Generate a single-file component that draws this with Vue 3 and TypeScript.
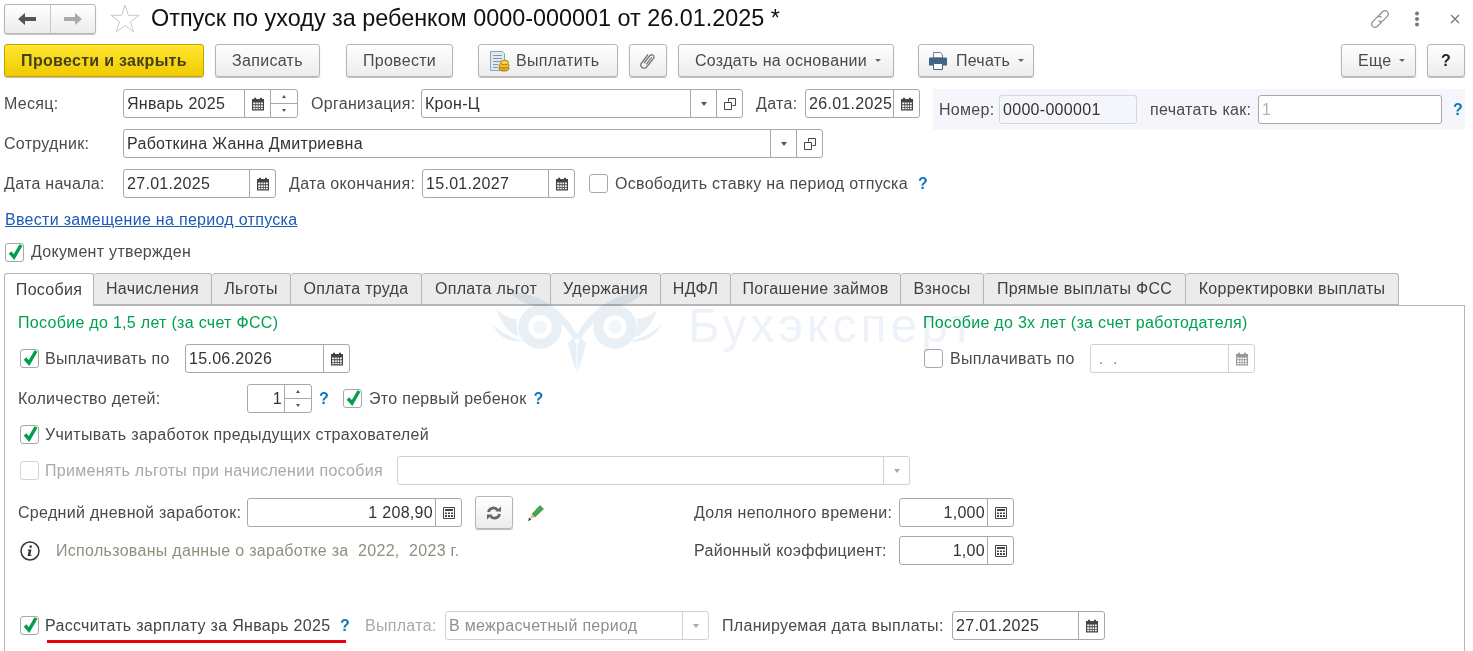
<script setup lang="ts">
interface Tab { label: string; width: number }
const tabs: Tab[] = [
  { label: 'Пособия', width: 90 },
  { label: 'Начисления', width: 118 },
  { label: 'Льготы', width: 79 },
  { label: 'Оплата труда', width: 131 },
  { label: 'Оплата льгот', width: 129 },
  { label: 'Удержания', width: 110 },
  { label: 'НДФЛ', width: 70 },
  { label: 'Погашение займов', width: 170 },
  { label: 'Взносы', width: 83 },
  { label: 'Прямые выплаты ФСС', width: 202 },
  { label: 'Корректировки выплаты', width: 213 },
]
</script>

<template>
  <div class="page">
    <svg class="defs" aria-hidden="true">
      <defs>
        <symbol id="cal" viewBox="0 0 14 14">
          <path fill="currentColor" d="M1 2h2V.8h2V2h4V.8h2V2h2v11.5H1z"/>
          <path fill="#fff" d="M2.2 5.5h2.2v1.8H2.2zM5.2 5.5h1.6v1.8H5.2zM7.6 5.5h1.6v1.8H7.6zM10 5.5h1.8v1.8H10zM2.2 8.2h2.2V10H2.2zM5.2 8.2h1.6V10H5.2zM7.6 8.2h1.6V10H7.6zM10 8.2h1.8V10H10zM2.2 10.8h2.2v1.5H2.2zM5.2 10.8h1.6v1.5H5.2zM7.6 10.8h1.6v1.5H7.6zM10 10.8h1.8v1.5H10z"/>
        </symbol>
        <symbol id="calc" viewBox="0 0 14 14">
          <path fill="none" stroke="currentColor" d="M1.5 1.5h11v11h-11z"/>
          <path fill="currentColor" d="M3 3h8v2H3zM3 6.5h2v1.5H3zM6 6.5h2v1.5H6zM9 6.5h2v1.5H9zM3 9h2v2H3zM6 9h2v2H6zM9 9h2v2H9z"/>
        </symbol>
        <symbol id="open" viewBox="0 0 12 12">
          <path fill="none" stroke="currentColor" d="M4.5 3.5v-3h7v7h-3M.5 4.5h7v7h-7z"/>
        </symbol>
        <symbol id="check" viewBox="0 0 19 19">
          <path fill="none" stroke="#00a04a" stroke-width="3.4" d="M4 9.5l4 4.500 7-12"/>
        </symbol>
      </defs>
    </svg>

    <header class="title-row">
      <div class="nav">
        <span class="nav-b">
          <svg width="18" height="14" viewBox="0 0 18 14"><path fill="#555" d="M0 7l7-6v4h11v4H7v4z"/></svg>
        </span>
        <span class="nav-b">
          <svg width="18" height="14" viewBox="0 0 18 14"><path fill="#aaa" d="M18 7l-7-6v4H0v4h11v4z"/></svg>
        </span>
      </div>
      <svg class="star" width="30" height="29" viewBox="0 0 30 29"><path fill="#fff" stroke="#c6c9cc" d="M15 1l3.4 10.300h10.800l-8.800 6.400 3.400 10.300-8.800-6.400-8.800 6.400 3.400-10.300-8.800-6.400h10.800z"/></svg>
      <h1 class="title">Отпуск по уходу за ребенком 0000-000001 от 26.01.2025 *</h1>
      <div class="win-icons">
        <svg class="i-link" width="20" height="20" viewBox="0 0 20 20" fill="none" stroke="#8f8f8f" stroke-width="1.200"><path d="M8 7.500l4.800-5a3.300 3.300 0 0 1 4.700 4.600l-4.400 4.500a3.300 3.300 0 0 1-4.700 0"/><path d="M12 12.500l-4.800 5a3.300 3.300 0 0 1-4.700-4.600l4.400-4.500a3.300 3.300 0 0 1 4.700 0"/></svg>
        <svg class="i-keb" width="6" height="16" viewBox="0 0 6 16"><g fill="#777"><circle cx="3" cy="2.500" r="2"/><circle cx="3" cy="8" r="2"/><circle cx="3" cy="13.500" r="2"/></g></svg>
        <svg class="i-x" width="10" height="10" viewBox="0 0 10 10"><path stroke="#777" stroke-width="1.300" d="M1 1l8 8M9 1l-8 8"/></svg>
      </div>
    </header>

    <div class="toolbar">
      <button class="btn primary b-post">Провести и закрыть</button>
      <button class="btn b-save">Записать</button>
      <button class="btn b-run">Провести</button>
      <button class="btn b-pay">
        <svg width="24" height="24" viewBox="0 0 24 24">
          <path fill="#dfe9f2" stroke="#8da3b8" d="M3.500 2.500h12l2 2v17h-14z"/>
          <path stroke="#8195a8" d="M6 6.500h9M6 9.500h9M6 12.500h9M6 15.500h5M6 18.500h5"/>
          <ellipse cx="17" cy="19.500" rx="5" ry="2.500" fill="#e0a820" stroke="#b07f10"/>
          <ellipse cx="17" cy="16.500" rx="5" ry="2.500" fill="#f0c030" stroke="#b07f10"/>
          <ellipse cx="17.500" cy="13.500" rx="4" ry="2.300" fill="#f6d050" stroke="#b07f10"/>
        </svg>
        Выплатить
      </button>
      <button class="btn b-clip">
        <svg width="16" height="18" viewBox="0 0 16 18" fill="none" stroke="#777" stroke-width="1.300"><path d="M4 11l6-7.500a2.300 2.300 0 0 1 3.600 2.800l-7 8.700a3.200 3.200 0 0 1-5-4L8 2.500M6.200 12.300l5.500-7"/></svg>
      </button>
      <button class="btn b-create">Создать на основании<i class="caret"></i></button>
      <button class="btn b-print">
        <svg width="20" height="20" viewBox="0 0 20 20">
          <path fill="#fff" stroke="#6d7f90" d="M5.500 1.500h7l2 2.500v3h-9z"/>
          <path fill="#3f6688" d="M1 7.500a1 1 0 0 1 1-1h16a1 1 0 0 1 1 1v7h-4v-2H5v2H1z"/>
          <path fill="#fff" stroke="#4d6477" d="M5.500 12.500h9v6h-9z"/>
        </svg>
        Печать<i class="caret"></i>
      </button>
      <span class="spacer"></span>
      <button class="btn b-more">Еще<i class="caret"></i></button>
      <button class="btn b-help">?</button>
    </div>

    <section class="head">
      <div class="head-left">
        <div class="row">
          <label class="lb l119">Месяц:</label>
          <div class="field w175">
            <span class="val">Январь 2025</span>
            <span class="cell"><svg class="ic"><use href="#cal"/></svg></span>
            <span class="spin"><i class="up"></i><i class="dn"></i></span>
          </div>
          <label class="lb l110 ml13">Организация:</label>
          <div class="field w322">
            <span class="val">Крон-Ц</span>
            <span class="cell"><i class="drop"></i></span>
            <span class="cell"><svg class="ic-open"><use href="#open"/></svg></span>
          </div>
          <label class="lb l49 ml13">Дата:</label>
          <div class="field w115">
            <span class="val">26.01.2025</span>
            <span class="cell"><svg class="ic"><use href="#cal"/></svg></span>
          </div>
        </div>
        <div class="row mt11">
          <label class="lb l119">Сотрудник:</label>
          <div class="field w700">
            <span class="val">Работкина Жанна Дмитриевна</span>
            <span class="cell"><i class="drop"></i></span>
            <span class="cell"><svg class="ic-open"><use href="#open"/></svg></span>
          </div>
        </div>
        <div class="row mt11">
          <label class="lb l119">Дата начала:</label>
          <div class="field w153">
            <span class="val">27.01.2025</span>
            <span class="cell"><svg class="ic"><use href="#cal"/></svg></span>
          </div>
          <label class="lb l133 ml13">Дата окончания:</label>
          <div class="field w153">
            <span class="val">15.01.2027</span>
            <span class="cell"><svg class="ic"><use href="#cal"/></svg></span>
          </div>
          <span class="cb ml14"></span>
          <label class="lb ml7">Освободить ставку на период отпуска</label>
          <span class="q ml10">?</span>
        </div>
      </div>
      <div class="num-panel">
        <label class="lb l60">Номер:</label>
        <div class="field w138 readonly"><span class="val">0000-000001</span></div>
        <label class="lb l108 ml13">печатать как:</label>
        <div class="field w184"><span class="val hint-val">1</span></div>
        <span class="q ml11">?</span>
      </div>
    </section>

    <a class="link" href="#">Ввести замещение на период отпуска</a>
    <div class="row approved">
      <span class="cb on"><svg><use href="#check"/></svg></span>
      <label class="lb ml7">Документ утвержден</label>
    </div>

    <nav class="tabs">
      <span
        v-for="(t, i) in tabs"
        :key="t.label"
        class="tab"
        :class="{ active: i === 0 }"
        :style="{ width: t.width + 'px' }"
      >{{ t.label }}</span>
    </nav>

    <main class="panel">
      <div class="top-grid">
        <div class="col-left">
          <div class="heading">Пособие до 1,5 лет (за счет ФСС)</div>
          <div class="row mt11 ind2">
            <span class="cb on"><svg><use href="#check"/></svg></span>
            <label class="lb ml6 l140">Выплачивать по</label>
            <div class="field w165">
              <span class="val">15.06.2026</span>
              <span class="cell"><svg class="ic"><use href="#cal"/></svg></span>
            </div>
          </div>
          <div class="row mt11">
            <label class="lb l229">Количество детей:</label>
            <div class="field w65">
              <span class="val right">1</span>
              <span class="spin"><i class="up"></i><i class="dn"></i></span>
            </div>
            <span class="q ml7 qw17">?</span>
            <span class="cb on ml7"><svg><use href="#check"/></svg></span>
            <label class="lb ml7">Это первый ребенок</label>
            <span class="q ml7">?</span>
          </div>
          <div class="row mt7 ind2">
            <span class="cb on"><svg><use href="#check"/></svg></span>
            <label class="lb ml6">Учитывать заработок предыдущих страхователей</label>
          </div>
          <div class="row mt7 ind2">
            <span class="cb disabled"></span>
            <label class="lb ml6 off l352">Применять льготы при начислении пособия</label>
            <div class="field w513 dis">
              <span class="val"></span>
              <span class="cell"><i class="drop"></i></span>
            </div>
          </div>
        </div>
        <div class="col-right">
          <div class="heading">Пособие до 3х лет (за счет работодателя)</div>
          <div class="row mt11 ind1">
            <span class="cb"></span>
            <label class="lb ml7 l140">Выплачивать по</label>
            <div class="field w165 dis">
              <span class="val dots">&nbsp;.&nbsp;&nbsp;.</span>
              <span class="cell"><svg class="ic"><use href="#cal"/></svg></span>
            </div>
          </div>
        </div>
      </div>

      <div class="mid-grid">
        <div class="mid-left">
          <div class="row">
            <label class="lb l229">Средний дневной заработок:</label>
            <div class="field w215">
              <span class="val right">1 208,90</span>
              <span class="cell"><svg class="ic"><use href="#calc"/></svg></span>
            </div>
            <button class="btn b-refresh">
              <svg width="16" height="14" viewBox="0 0 16 14" fill="none" stroke="#666" stroke-width="2.800"><path d="M2.500 6a5 5 0 0 1 9-2M13.500 8a5 5 0 0 1-9 2"/><path fill="#666" stroke="none" d="M9.500 5.500h5.500V.5zM6.500 8.500H1v5z"/></svg>
            </button>
            <svg class="pencil" width="18" height="18" viewBox="0 0 18 18">
              <path fill="#46a84a" stroke="#2f7f35" stroke-width=".6" d="M5 10l8-8.500 3.500 3.500L8 13z"/>
              <path fill="#d9b98a" d="M5 10l3 3-5 2z"/>
              <path fill="#444" d="M1 17l1.200-3.500 2.200 2.200z"/>
            </svg>
          </div>
          <div class="row mt9">
            <svg class="info" width="20" height="20" viewBox="0 0 20 20">
              <circle cx="10" cy="10" r="9" fill="none" stroke="#333" stroke-width="1.500"/>
              <path fill="#333" d="M9.500 4.500h2.300v2.200H9.500zM8 8.500h3.500l-1.300 5.300h1.300l-.3 1.200H7.500l1.300-5.300H7.800z"/>
            </svg>
            <span class="note">Использованы данные о заработке за&nbsp; 2022,&nbsp; 2023 г.</span>
          </div>
        </div>
        <div class="mid-right">
          <div class="row">
            <label class="lb l205">Доля неполного времени:</label>
            <div class="field w115">
              <span class="val right">1,000</span>
              <span class="cell"><svg class="ic"><use href="#calc"/></svg></span>
            </div>
          </div>
          <div class="row mt9">
            <label class="lb l205">Районный коэффициент:</label>
            <div class="field w115">
              <span class="val right">1,00</span>
              <span class="cell"><svg class="ic"><use href="#calc"/></svg></span>
            </div>
          </div>
        </div>
      </div>

      <div class="row calc-row ind2">
        <span class="cb on"><svg><use href="#check"/></svg></span>
        <label class="lb ml6 marked">Рассчитать зарплату за Январь 2025 <span class="q-in">?</span></label>
        <label class="lb off pay-l">Выплата:</label>
        <div class="field w264 dis">
          <span class="val off-t">В межрасчетный период</span>
          <span class="cell"><i class="drop"></i></span>
        </div>
        <label class="lb l230 ml13">Планируемая дата выплаты:</label>
        <div class="field w153">
          <span class="val">27.01.2025</span>
          <span class="cell"><svg class="ic"><use href="#cal"/></svg></span>
        </div>
      </div>

      <div class="watermark" aria-hidden="true">
        <svg class="owl" width="180" height="105" viewBox="0 0 180 105">
          <g fill="none" stroke="#e8f0f6" stroke-width="10">
            <circle cx="50" cy="52" r="16.700"/>
            <circle cx="125" cy="52" r="16.700"/>
          </g>
          <g fill="#f2f6f9">
            <circle cx="50" cy="52" r="6.700"/>
            <circle cx="125" cy="52" r="6.700"/>
          </g>
          <g fill="#e8f0f6">
            <path d="M18 17C42 16 72 30 87 60V72C78 50 56 32 34 28Z"/>
            <path d="M156 17C132 16 102 30 87 60V72C96 50 118 32 140 28Z"/>
            <path d="M7 34C10 46 18 58 29 62 27 56 26 50 27 44 20 44 12 40 7 34Z"/>
            <path d="M3 50C8 62 20 68 34 66 24 64 12 58 3 50Z"/>
            <path d="M167 34C164 46 156 58 145 62 147 56 148 50 147 44 154 44 162 40 167 34Z"/>
            <path d="M171 50C166 62 154 68 140 66 150 64 162 58 171 50Z"/>
            <path d="M78 68C80 78 84 90 87 98 90 90 94 78 96 68 93 66 90 62 87 58 84 62 81 66 78 68Z"/>
          </g>
          <g fill="#fff">
            <circle cx="87" cy="66" r="2.500"/>
            <path d="M86.500 66h1v32h-1z"/>
          </g>
        </svg>
        <span class="wm-text">Бухэксперт</span>
      </div>
    </main>
  </div>
</template>

<style>
html, body { margin: 0; background: #fff; overflow: hidden; }
</style>

<style scoped>
.page { position: relative; width: 1473px; height: 651px; overflow: hidden; background: #fff; font: 16px "Liberation Sans", Arial, sans-serif; color: #4a4a4a; letter-spacing: .3px; }
.defs { display: block; width: 0; height: 0; }

.title-row { display: flex; align-items: center; height: 37px; padding: 0 13px 0 4px; }
.nav { display: flex; width: 92px; height: 30px; box-sizing: border-box; border: 1px solid #b5b5b5; border-radius: 3px; background: linear-gradient(#fff, #ececec); box-shadow: 0 1px 1px #c4c4c4; }
.nav-b { flex: 1; display: flex; align-items: center; justify-content: center; }
.nav-b + .nav-b { border-left: 1px solid #c8c8c8; }
.star { margin-left: 14px; }
.title { margin: 0 0 0 11px; font-size: 23.4px; font-weight: 400; color: #111; letter-spacing: 0; white-space: nowrap; }
.win-icons { margin-left: auto; display: flex; align-items: center; }
.i-keb { margin-left: 24px; }
.i-x { margin-left: 30px; }

.toolbar { display: flex; align-items: flex-start; height: 33px; margin-top: 7px; padding: 0 8px 0 4px; }
.btn { display: flex; align-items: center; justify-content: center; box-sizing: border-box; height: 33px; padding: 0; border: 1px solid #b5b5b5; border-radius: 3px; background: linear-gradient(#fff, #ececec); box-shadow: 0 1px 1px #bdbdbd; font: inherit; letter-spacing: inherit; color: #4a4a4a; }
.primary { background: linear-gradient(#ffe631, #f1ca00); border-color: #c4a600; font-weight: 700; color: #44401a; }
.b-post { width: 200px; }
.b-save { width: 105px; margin-left: 11px; }
.b-run { width: 107px; margin-left: 26px; }
.b-pay { width: 140px; margin-left: 25px; gap: 5px; justify-content: flex-start; padding-left: 8px; }
.b-clip { width: 38px; margin-left: 11px; }
.b-create { width: 216px; margin-left: 11px; justify-content: flex-start; padding-left: 16px; }
.b-print { width: 116px; margin-left: 24px; gap: 8px; }
.b-print .caret { margin-left: 0; }
.spacer { flex: 1; }
.b-more { width: 75px; justify-content: flex-start; padding-left: 16px; }
.b-help { width: 38px; margin-left: 11px; color: #222; font-weight: 700; }
.caret { display: inline-block; margin-left: 8px; border: 3.500px solid transparent; border-top: 3px solid #666; border-bottom: 0; }

.head { display: flex; align-items: flex-start; margin-top: 12px; padding-left: 4px; }
.head-left { width: 929px; }
.row { display: flex; align-items: center; min-height: 29px; white-space: nowrap; }
.lb { display: block; flex: none; }
.off { color: #a9a9a9; }
.l119 { width: 119px; } .l110 { width: 110px; } .l49 { width: 49px; } .l133 { width: 133px; }
.l60 { width: 60px; } .l108 { width: 108px; } .l140 { width: 140px; } .l229 { width: 229px; }
.l205 { width: 205px; } .l230 { width: 230px; } .l352 { width: 352px; }
.ml6 { margin-left: 6px; } .ml7 { margin-left: 7px; } .ml10 { margin-left: 10px; } .ml11 { margin-left: 11px; } .ml13 { margin-left: 13px; } .ml14 { margin-left: 14px; }
.mt7 { margin-top: 7px; } .mt9 { margin-top: 9px; } .mt11 { margin-top: 11px; }
.ind1 { padding-left: 1px; }
.ind2 { padding-left: 2px; }

.field { display: flex; flex: none; align-items: stretch; box-sizing: border-box; height: 29px; border: 1px solid #a8a8a8; border-radius: 3px; background: #fff; color: #333; }
.val { flex: 1; min-width: 0; padding: 0 2px 0 3px; line-height: 27px; overflow: hidden; }
.right { text-align: right; }
.cell { flex: none; display: flex; align-items: center; justify-content: center; width: 25px; border-left: 1px solid #a8a8a8; color: #444; }
.spin { flex: none; display: flex; flex-direction: column; width: 26px; border-left: 1px solid #a8a8a8; }
.spin i { flex: 1; display: flex; align-items: center; justify-content: center; }
.up { border-bottom: 1px solid #a8a8a8; }
.up::after { content: ""; border: 2.500px solid transparent; border-bottom: 3px solid #555; border-top: 0; }
.dn::after { content: ""; border: 2.500px solid transparent; border-top: 3px solid #555; border-bottom: 0; }
.drop { display: block; border: 3.500px solid transparent; border-top: 4px solid #555; border-bottom: 0; }
.ic { width: 14px; height: 14px; }
.ic-open { width: 12px; height: 12px; }
.w65 { width: 65px; } .w115 { width: 115px; } .w138 { width: 138px; } .w153 { width: 153px; } .w165 { width: 165px; }
.w175 { width: 175px; } .w184 { width: 184px; } .w215 { width: 215px; } .w264 { width: 264px; } .w322 { width: 322px; }
.w513 { width: 513px; } .w700 { width: 700px; }
.readonly { background: #f5f6fb; border-color: #d4d6dc; }
.dis { border-color: #d2d2d2; }
.dis .cell { border-left-color: #d2d2d2; color: #999; }
.dis .drop { border-top-color: #aaa; }
.hint-val { color: #b5b5b5; }
.dots { color: #888; }
.off-t { color: #8f8f8f; }

.num-panel { display: flex; align-items: center; width: 532px; height: 41px; box-sizing: border-box; padding-left: 6px; background: #f5f6fb; }
.q { color: #0b78bd; font-weight: 700; font-size: 16px; }
.qw17 { width: 17px; }
.q-in { color: #0b78bd; font-weight: 700; font-size: 16px; margin-left: 5px; }

.cb { position: relative; flex: none; box-sizing: border-box; display: block; width: 19px; height: 19px; border: 1px solid #a8a8a8; border-radius: 3px; background: #fff; }
.cb svg { position: absolute; left: 0; top: -1px; width: 19px; height: 19px; overflow: visible; }
.disabled { border-color: #d4d4d4; }

.link { display: block; margin: 12px 0 0 5px; height: 20px; line-height: 20px; color: #1b5bb5; text-decoration: underline; }
.approved { margin: 10px 0 0 5px; min-height: 24px; }

.tabs { display: flex; margin: 9px 0 0 4px; height: 32px; position: relative; z-index: 1; }
.tab { display: flex; flex: none; align-items: center; justify-content: center; box-sizing: border-box; height: 32px; border: 1px solid #b5b5b5; border-left: 0; background: #ebebeb; color: #3f3f3f; border-radius: 3px 3px 0 0; }
.tab:first-child { border-left: 1px solid #b5b5b5; }
.tab.active { height: 33px; background: #fff; border-bottom: 0; }

.panel { position: relative; box-sizing: border-box; width: 1461px; height: 346px; margin-left: 4px; padding: 7px 0 0 13px; border: 1px solid #b5b5b5; border-bottom: 0; background: #fff; }
.top-grid { display: grid; grid-template-columns: 905px 1fr; }
.heading { height: 20px; line-height: 20px; color: #00a24f; }
.mid-grid { display: grid; grid-template-columns: 676px 1fr; margin-top: 13px; }
.b-refresh { width: 38px; height: 33px; margin: -2px 0 -2px 13px; }
.pencil { margin-left: 14px; }
.info { margin-left: 2px; }
.note { margin-left: 16px; color: #8f8f80; }
.calc-row { margin-top: 46px; }
.marked { position: relative; width: 320px; color: #444; }
.marked::after { content: ""; position: absolute; left: 2px; top: 23px; width: 299px; height: 3px; background: #e60012; }
.pay-l { width: 80px; }

.watermark { position: absolute; inset: -32px 0 0 0; pointer-events: none; z-index: 2; mix-blend-mode: multiply; }
.owl { position: absolute; left: 485px; top: 1px; }
.wm-text { position: absolute; left: 683px; top: 22px; font-size: 48px; line-height: 60px; color: #edf3f9; letter-spacing: 4px; }
</style>
